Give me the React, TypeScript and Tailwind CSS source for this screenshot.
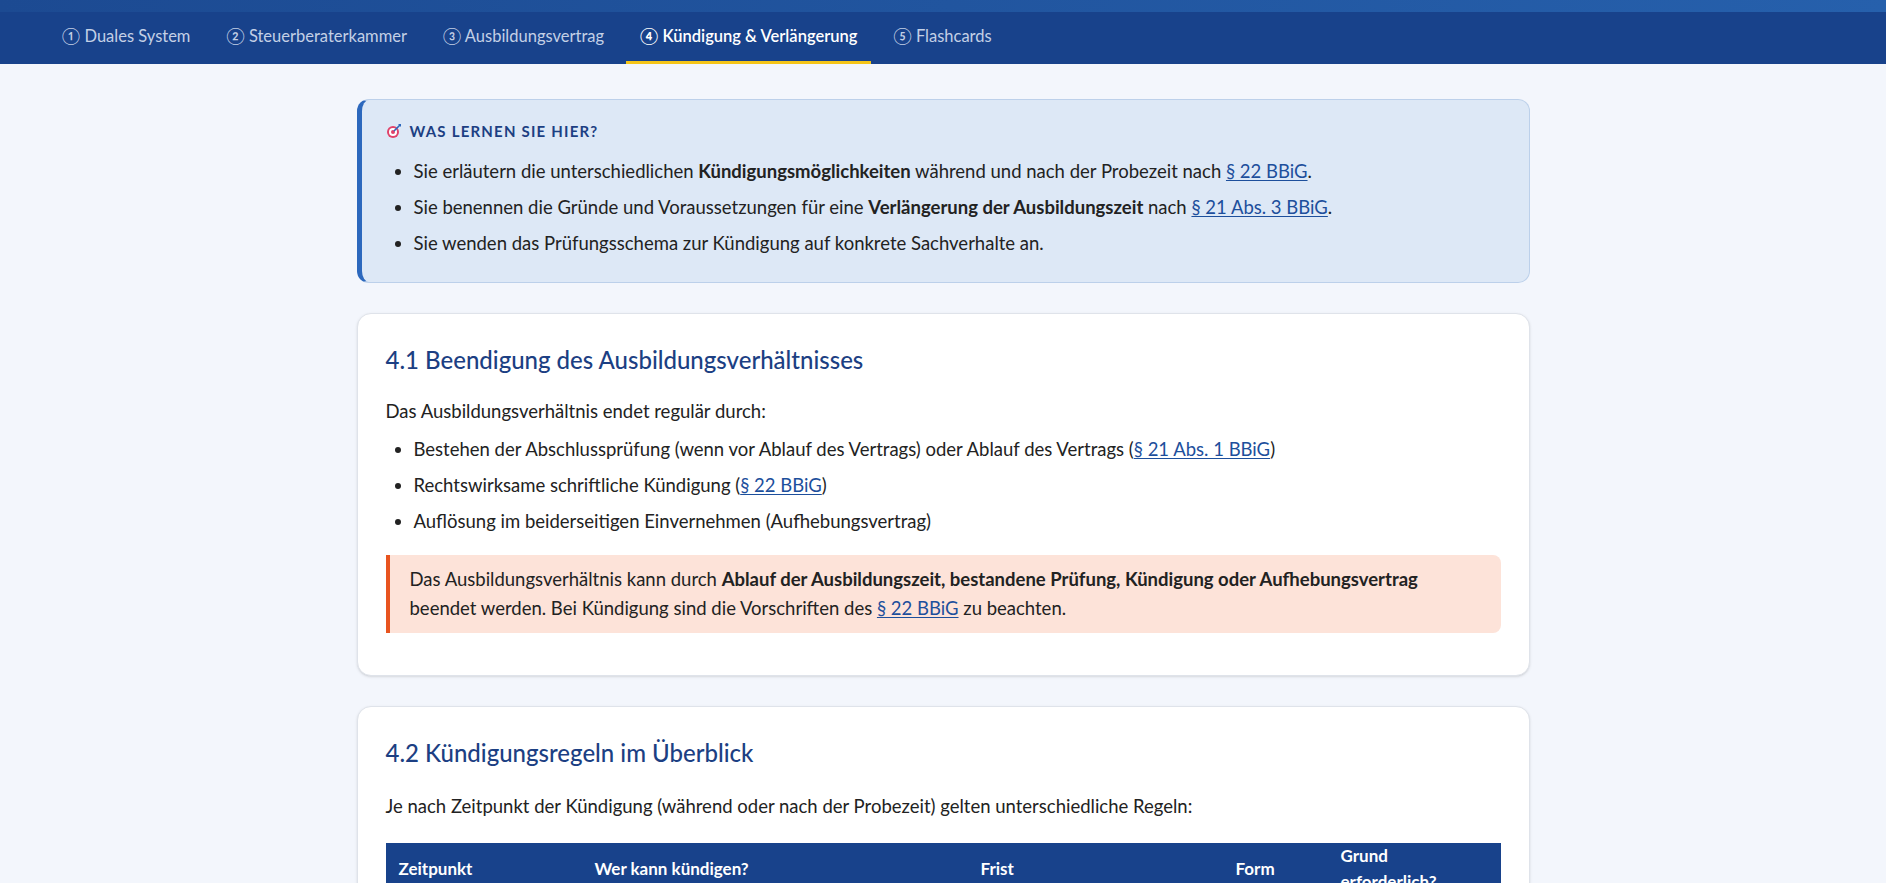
import React from "react";

const L = ({ children }: { children: React.ReactNode }) => (
  <a className="text-[#1d4f9c] underline underline-offset-2">{children}</a>
);

export default function App() {
  const tabs = ["① Duales System", "② Steuerberaterkammer", "③ Ausbildungsvertrag", "④ Kündigung & Verlängerung", "⑤ Flashcards"];
  return (
    <div className="min-h-screen bg-[#f3f6fc] text-[#222] text-[18.5px]" style={{ fontFamily: "Lato, 'Open Sans', sans-serif" }}>
      <div className="h-[12px] bg-gradient-to-r from-[#1c4a92] to-[#2660ac]" />
      <nav className="h-[52px] bg-[#18428b] flex items-stretch pl-[48px]">
        {tabs.map((t, i) => (
          <div key={t} className={`flex items-center px-[14px] text-[16.5px] mr-[8px] border-b-[3px] ${i === 3 ? "text-white border-[#f5c518] font-semibold" : "text-[#c3d0e6] border-transparent"}`}>
            {t}
          </div>
        ))}
      </nav>
      <main className="w-[1173px] mx-auto pt-[35px] flex flex-col gap-[30px]">
        <section className="bg-[#dde8f6] border border-[#bcd0ea] border-l-[5px] border-l-[#2c68bd] rounded-[12px] px-[24px] pt-[20px] pb-[26px]">
          <h3 className="flex items-center gap-[8px] text-[#1c3f83] font-bold text-[15px] tracking-[0.08em]">
            <svg width="16" height="16" viewBox="0 0 16 16"><circle cx="7" cy="9" r="6" fill="#e0426a"/><circle cx="7" cy="9" r="4" fill="#fff"/><circle cx="7" cy="9" r="2" fill="#e0426a"/><path d="M8 8 L14 2" stroke="#2c68bd" strokeWidth="1.6"/><path d="M12 1 L15 1 L15 4" fill="#2c68bd"/></svg>
            WAS LERNEN SIE HIER?
          </h3>
          <ul className="list-disc pl-[28px] mt-[16px] flex flex-col gap-[11px] leading-[25px]">
            <li>Sie erläutern die unterschiedlichen <b>Kündigungsmöglichkeiten</b> während und nach der Probezeit nach <L>§ 22 BBiG</L>.</li>
            <li>Sie benennen die Gründe und Voraussetzungen für eine <b>Verlängerung der Ausbildungszeit</b> nach <L>§ 21 Abs. 3 BBiG</L>.</li>
            <li>Sie wenden das Prüfungsschema zur Kündigung auf konkrete Sachverhalte an.</li>
          </ul>
        </section>
        <section className="bg-white border border-[#dfe3ea] rounded-[14px] px-[28px] pt-[28px] pb-[42px] shadow-sm">
          <h2 className="text-[#1c3f83] text-[24px] font-medium">4.1 Beendigung des Ausbildungsverhältnisses</h2>
          <p className="mt-[20px]">Das Ausbildungsverhältnis endet regulär durch:</p>
          <ul className="list-disc pl-[28px] mt-[12px] flex flex-col gap-[11px] leading-[25px]">
            <li>Bestehen der Abschlussprüfung (wenn vor Ablauf des Vertrags) oder Ablauf des Vertrags (<L>§ 21 Abs. 1 BBiG</L>)</li>
            <li>Rechtswirksame schriftliche Kündigung (<L>§ 22 BBiG</L>)</li>
            <li>Auflösung im beiderseitigen Einvernehmen (Aufhebungsvertrag)</li>
          </ul>
          <div className="mt-[21px] bg-[#fde3d9] border-l-[4px] border-l-[#e8541f] rounded-r-[8px] pl-[20px] pr-[60px] py-[10px] leading-[29px]">
            Das Ausbildungsverhältnis kann durch <b>Ablauf der Ausbildungszeit, bestandene Prüfung, Kündigung oder Aufhebungsvertrag</b> beendet werden. Bei Kündigung sind die Vorschriften des <L>§ 22 BBiG</L> zu beachten.
          </div>
        </section>
        <section className="bg-white border border-[#dfe3ea] rounded-[14px] px-[28px] pt-[28px] pb-[30px] shadow-sm">
          <h2 className="text-[#1c3f83] text-[24px] font-medium">4.2 Kündigungsregeln im Überblick</h2>
          <p className="mt-[22px]">Je nach Zeitpunkt der Kündigung (während oder nach der Probezeit) gelten unterschiedliche Regeln:</p>
          <table className="w-full mt-[22px] text-[17px] table-fixed">
            <thead>
              <tr className="bg-[#18428b] text-white h-[42px] text-left">
                <th className="px-[13px] font-bold w-[196px]">Zeitpunkt</th>
                <th className="px-[13px] font-bold w-[386px]">Wer kann kündigen?</th>
                <th className="px-[13px] font-bold w-[255px]">Frist</th>
                <th className="px-[13px] font-bold w-[105px]">Form</th>
                <th className="px-[13px] font-bold">Grund erforderlich?</th>
              </tr>
            </thead>
          </table>
        </section>
      </main>
    </div>
  );
}
